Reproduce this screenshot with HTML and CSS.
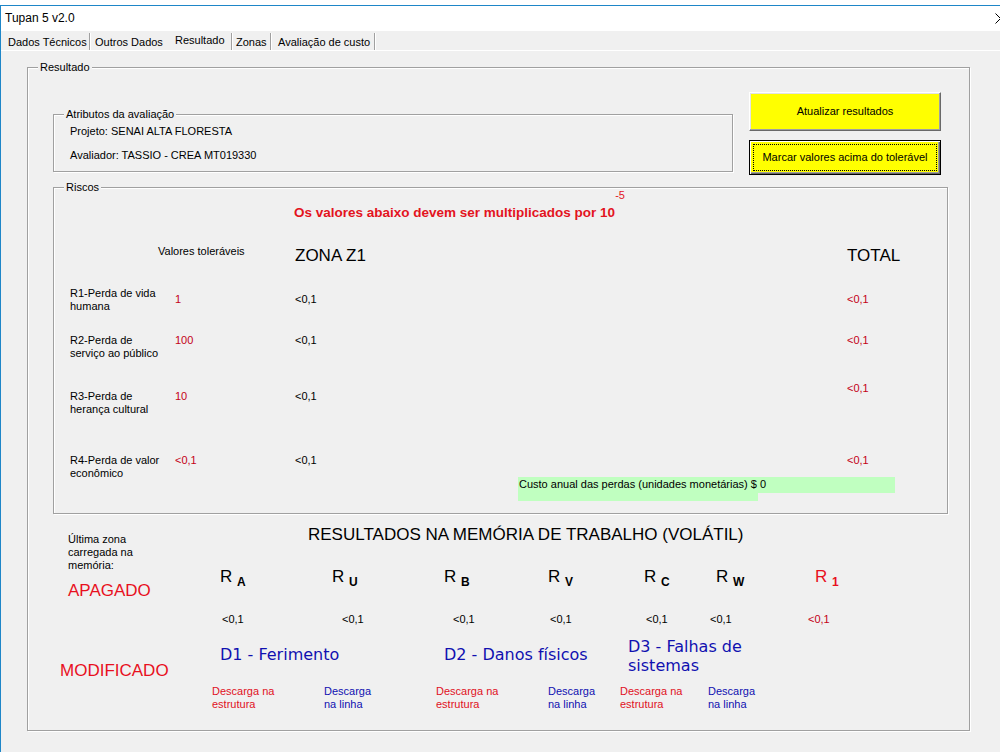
FILE: index.html
```html
<!DOCTYPE html>
<html lang="pt">
<head>
<meta charset="utf-8">
<title>Tupan 5 v2.0</title>
<link rel="stylesheet" href="styles.css">
</head>
<body>
<div class="window">
  <div class="titlebar">
    <span class="title">Tupan 5 v2.0</span>
    <svg class="close" width="11" height="11" viewBox="0 0 11 11"><path d="M0.5 0.5 L10.5 10.5 M10.5 0.5 L0.5 10.5" stroke="#000" stroke-width="1" fill="none"/></svg>
  </div>
  <div class="tabs">
    <div class="tab t1">Dados Técnicos</div>
    <div class="tab t2">Outros Dados</div>
    <div class="tab t3">Resultado</div>
    <div class="tab t4">Zonas</div>
    <div class="tab t5">Avaliação de custo</div>
  </div>
  <div class="frame outer">
    <div class="legend">Resultado</div>
    <div class="top-row">
      <div class="frame attrs">
        <div class="legend">Atributos da avaliação</div>
        <div class="attr attr-1">Projeto: SENAI ALTA FLORESTA</div>
        <div class="attr attr-2">Avaliador: TASSIO - CREA MT019330</div>
      </div>
      <div class="buttons">
        <div class="btn btn-update">Atualizar resultados</div>
        <div class="btn btn-mark"><span class="focus-ring">Marcar valores acima do tolerável</span></div>
      </div>
    </div>
    <div class="frame risks">
      <div class="legend">Riscos</div>
      <div class="note-row">
        <span class="note">Os valores abaixo devem ser multiplicados por 10</span>
        <span class="exp">-5</span>
      </div>
      <div class="risk-row head">
        <div class="tol-head">Valores toleráveis</div>
        <div class="col-title">ZONA Z1</div>
        <div class="col-title">TOTAL</div>
      </div>
      <div class="risk-row r1">
        <div class="r-label">R1-Perda de vida<br>humana</div>
        <div class="val tol">1</div>
        <div class="val zone">&lt;0,1</div>
        <div class="val tot">&lt;0,1</div>
      </div>
      <div class="risk-row r2">
        <div class="r-label">R2-Perda de<br>serviço ao público</div>
        <div class="val tol">100</div>
        <div class="val zone">&lt;0,1</div>
        <div class="val tot">&lt;0,1</div>
      </div>
      <div class="risk-row r3">
        <div class="r-label">R3-Perda de<br>herança cultural</div>
        <div class="val tol">10</div>
        <div class="val zone">&lt;0,1</div>
        <div class="val tot">&lt;0,1</div>
      </div>
      <div class="risk-row r4">
        <div class="r-label">R4-Perda de valor<br>econômico</div>
        <div class="val tol">&lt;0,1</div>
        <div class="val zone">
          <div>&lt;0,1</div>
          <div class="cost">
            <div class="cost-label">Custo anual das perdas (unidades monetárias) $</div>
            <div class="cost-value">0</div>
          </div>
        </div>
        <div class="val tot">&lt;0,1</div>
      </div>
    </div>
    <div class="memory">
      <div class="mem-left">
        <div class="last-zone">Última zona<br>carregada na<br>memória:</div>
        <div class="status status-apagado">APAGADO</div>
        <div class="status status-mod">MODIFICADO</div>
      </div>
      <div class="mem-right">
        <div class="mem-title">RESULTADOS NA MEMÓRIA DE TRABALHO (VOLÁTIL)</div>
        <div class="r-row">
          <div class="rsym">R <sub>A</sub></div>
          <div class="rsym">R <sub>U</sub></div>
          <div class="rsym">R <sub>B</sub></div>
          <div class="rsym">R <sub>V</sub></div>
          <div class="rsym">R <sub>C</sub></div>
          <div class="rsym">R <sub>W</sub></div>
          <div class="rsym rsym-red">R <sub>1</sub></div>
        </div>
        <div class="v-row">
          <div>&lt;0,1</div>
          <div>&lt;0,1</div>
          <div>&lt;0,1</div>
          <div>&lt;0,1</div>
          <div>&lt;0,1</div>
          <div>&lt;0,1</div>
          <div class="v-red">&lt;0,1</div>
        </div>
        <div class="d-row">
          <div class="d-one">D1 - Ferimento</div>
          <div class="d-one">D2 - Danos físicos</div>
          <div>D3 - Falhas de<br>sistemas</div>
        </div>
        <div class="desc-row">
          <div class="desc-s">Descarga na<br>estrutura</div>
          <div class="desc-l">Descarga<br>na linha</div>
          <div class="desc-s">Descarga na<br>estrutura</div>
          <div class="desc-l">Descarga<br>na linha</div>
          <div class="desc-s">Descarga na<br>estrutura</div>
          <div class="desc-l">Descarga<br>na linha</div>
        </div>
      </div>
    </div>
  </div>
</div>
</body>
</html>
```
FILE: styles.css
```css
* { box-sizing: border-box; }
html, body { margin: 0; padding: 0; }
body {
  width: 1000px;
  height: 752px;
  overflow: hidden;
  background: #ffffff;
  font-family: "Liberation Sans", Arial, sans-serif;
  font-size: 11px;
  line-height: 13px;
  color: #000;
}
.window {
  margin-top: 5px;
  height: 747px;
  border-top: 1px solid #1e86c8;
  border-left: 1px solid #1e86c8;
  background: #f0f0f0;
}
.titlebar {
  height: 25px;
  background: #ffffff;
  display: flex;
  align-items: center;
  justify-content: space-between;
  padding-left: 4px;
  font-size: 12px;
}
.close { margin-right: -6px; }

/* tabs */
.tabs {
  display: flex;
  height: 20px;
  padding-left: 2px;
  border-bottom: 1px solid #ffffff;
  white-space: nowrap;
}
.tab { margin-top: 2px; height: 17px; padding-top: 3px; }
.t1, .t3, .t4, .t5 { border-right: 1px solid #a0a0a0; box-shadow: 1px 0 0 #ffffff; }
.t1 { width: 87px; padding-left: 5px; }
.t2 { width: 80px; padding-left: 5px; }
.t3 { width: 62px; padding-left: 5px; padding-top: 1px; }
.t4 { width: 39px; padding-left: 4px; }
.t5 { width: 104px; padding-left: 7px; }

/* group frames */
.frame {
  border: 1px solid #a0a0a0;
  box-shadow: inset 1px 1px 0 #ffffff, 1px 1px 0 #ffffff;
}
.legend {
  width: fit-content;
  height: 13px;
  margin: -7px 0 -6px 10px;
  padding: 0 2px;
  background: #f0f0f0;
  white-space: nowrap;
}
.outer {
  margin: 16px 0 0 26px;
  width: 943px;
  height: 664px;
}

/* top row */
.top-row {
  display: flex;
  align-items: flex-start;
  padding: 24px 0 0 25px;
}
.attrs {
  margin-top: 22px;
  width: 680px;
  height: 58px;
}
.attr { margin-left: 16px; }
.attr-1 { margin-top: 10px; }
.attr-2 { margin-top: 11px; }
.buttons {
  margin-left: 16px;
  width: 192px;
  display: flex;
  flex-direction: column;
  gap: 9px;
}
.btn {
  background: #ffff00;
  display: flex;
  align-items: center;
  justify-content: center;
  white-space: nowrap;
}
.btn-update {
  height: 39px;
  border: 1px solid;
  border-color: #ffffff #696969 #696969 #ffffff;
  box-shadow: inset -1px -1px 0 #a0a0a0, inset 1px 1px 0 #e3e3e3;
}
.btn-mark {
  height: 35px;
  border: 1px solid #000000;
  box-shadow: inset 1px 1px 0 #ffffff, inset -1px -1px 0 #696969, inset -2px -2px 0 #a0a0a0;
  padding: 3px;
}
.focus-ring {
  width: 100%;
  height: 100%;
  border: 1px dotted #000000;
  display: flex;
  align-items: center;
  justify-content: center;
}

/* risks */
.risks {
  margin: 12px 0 0 25px;
  width: 895px;
  height: 327px;
}
.note-row {
  display: flex;
  align-items: flex-start;
  margin-top: 1px;
  padding-left: 240px;
  color: #e3141e;
}
.note {
  margin-top: 15px;
  font-weight: bold;
  font-size: 13.5px;
  line-height: 17px;
}
.exp { line-height: 12px; }
.risk-row {
  display: grid;
  grid-template-columns: 105px 120px 552px auto;
  align-items: start;
  padding-left: 16px;
}
.head { margin-top: 23px; }
.tol-head { grid-column: 1 / 3; margin: 1px 0 0 88px; }
.col-title { font-size: 17px; line-height: 21px; padding-top: 1px; }
.r1 { margin-top: 21px; }
.r2 { margin-top: 21px; }
.r3 { margin-top: 30px; }
.r4 { margin-top: 38px; }
.r1 .val { margin-top: 6px; }
.r3 .tot { margin-top: -8px; }
.tol, .tot { color: #c40018; }
.cost {
  display: flex;
  align-items: flex-start;
  margin: 10px 0 0 223px;
}
.cost-label {
  flex-shrink: 0;
  width: 240px;
  height: 24px;
  padding: 1px 0 0 1px;
  background: #c0ffc0;
  white-space: nowrap;
}
.cost-value {
  flex-shrink: 0;
  width: 137px;
  height: 16px;
  padding: 1px 0 0 2px;
  background: #c0ffc0;
}

/* memory */
.memory {
  display: grid;
  grid-template-columns: 184px auto;
}
.last-zone { margin: 19px 0 0 40px; }
.status {
  font-size: 17px;
  line-height: 20px;
  color: #e8101e;
}
.status-apagado { margin: 9px 0 0 40px; }
.status-mod { margin: 60px 0 0 32px; }
.mem-title {
  margin: 11px 0 0 96px;
  font-size: 17px;
  line-height: 20px;
  white-space: nowrap;
}
.r-row {
  display: grid;
  grid-template-columns: 112px 112px 104px 96px 72px 99px auto;
  padding-left: 8px;
  margin-top: 22px;
  height: 24px;
}
.rsym {
  font-size: 17px;
  line-height: 20px;
  white-space: nowrap;
}
.rsym sub {
  font-size: 12px;
  font-weight: bold;
  vertical-align: -4px;
  line-height: 0;
}
.rsym-red { color: #e8101e; }
.v-row {
  display: grid;
  grid-template-columns: 120px 111px 97px 96px 64px 98px auto;
  padding-left: 10px;
  margin-top: 22px;
}
.v-red { color: #c40018; }
.d-row {
  display: grid;
  grid-template-columns: 224px 184px auto;
  align-items: start;
  padding-left: 8px;
  margin-top: 11px;
  font-family: "DejaVu Sans", Verdana, sans-serif;
  font-size: 16px;
  line-height: 19px;
  color: #1010b0;
}
.d-one { margin-top: 8px; }
.desc-row {
  display: grid;
  grid-template-columns: 112px 112px 112px 72px 88px auto;
  margin-top: 10px;
}
.desc-s { color: #e0101e; }
.desc-l { color: #1010b0; }
```
